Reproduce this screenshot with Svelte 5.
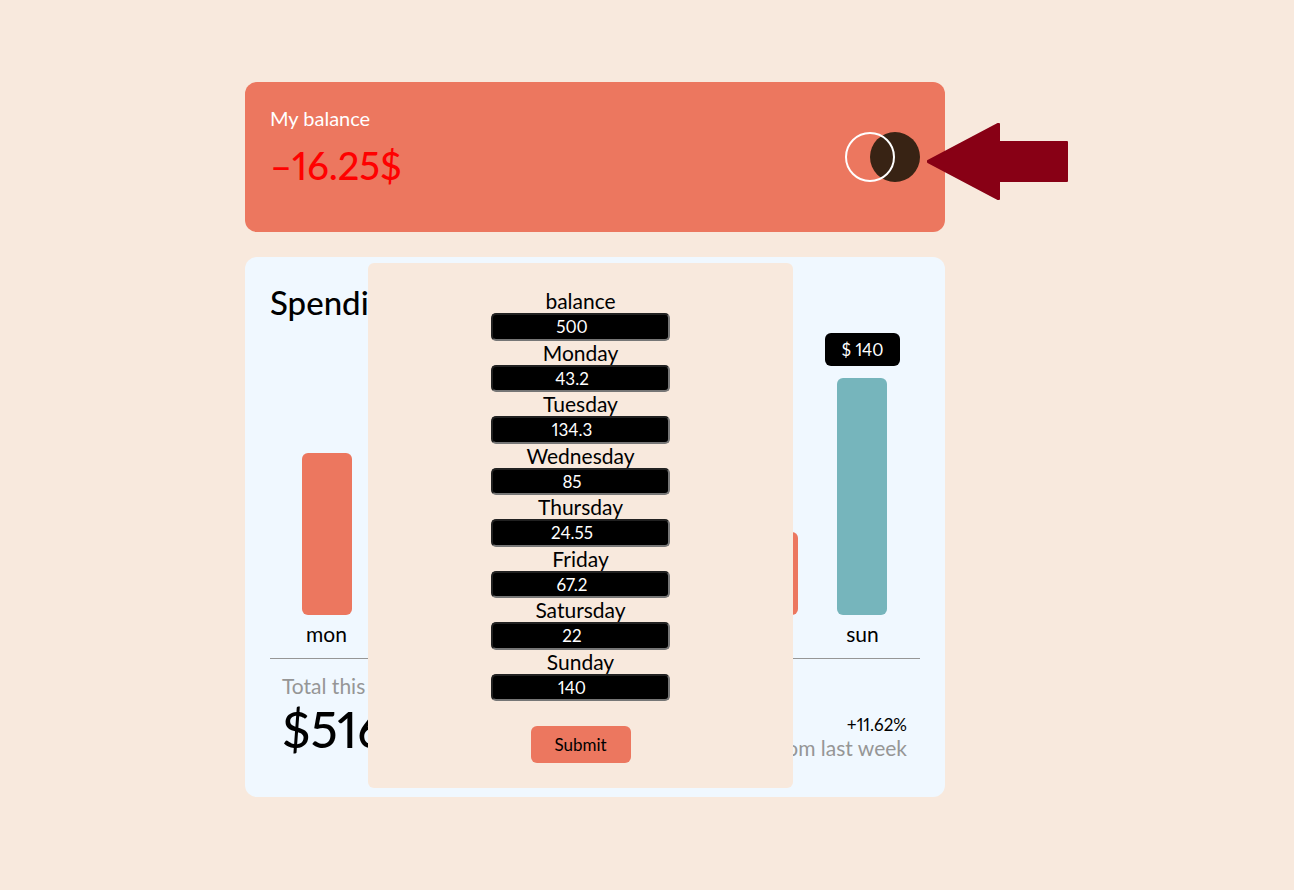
<script>
  let balance = $state(500);
  let days = $state([
    { name: 'Monday', short: 'mon', value: 43.2, height: 162 },
    { name: 'Tuesday', short: 'tue', value: 134.3, height: 230 },
    { name: 'Wednesday', short: 'wed', value: 85, height: 195 },
    { name: 'Thursday', short: 'thu', value: 24.55, height: 90 },
    { name: 'Friday', short: 'fri', value: 67.2, height: 180 },
    { name: 'Satursday', short: 'sat', value: 22, height: 83 },
    { name: 'Sunday', short: 'sun', value: 140, height: 237 }
  ]);
  const total = $derived(days.reduce((sum, day) => sum + (day.value || 0), 0));
  const remaining = $derived(balance - total);
  const highest = $derived(Math.max(...days.map((day) => day.value || 0)));
</script>

<main>
  <section class="balance">
    <div>
      <h2>My balance</h2>
      <p class="amount" class:negative={remaining < 0}>{remaining.toFixed(2).replace('-', '–')}$</p>
    </div>
    <button class="toggle" type="button" aria-label="Edit amounts">
      <svg width="75" height="50" viewBox="0 0 75 50" aria-hidden="true">
        <circle cx="50" cy="25" r="25" fill="#382314" />
        <circle cx="25" cy="25" r="24" fill="none" stroke="#fff" stroke-width="2" />
      </svg>
    </button>
    <svg class="pointer" width="141" height="77" viewBox="0 0 141 77" aria-hidden="true">
      <path d="M1 38 71 1h1v18h68v39H72v18h-1L1 39Z" fill="#880015" stroke="#880015" stroke-width="2" stroke-linejoin="round" />
    </svg>
  </section>

  <section class="spending">
    <h1>Spending - Last 7 days</h1>
    <div class="chart">
      {#each days as day}
        <div class="day">
          {#if day.value === highest}<span class="tip">$ {day.value}</span>{/if}
          <div class="bar" class:top={day.value === highest} style="height: {day.height}px"></div>
          <span class="name">{day.short}</span>
        </div>
      {/each}
    </div>
    <div class="summary">
      <div>
        <p class="muted">Total this week</p>
        <p class="total">${total.toFixed(2)}</p>
      </div>
      <div class="change">
        <p class="percent">+11.62%</p>
        <p class="muted">from last week</p>
      </div>
    </div>

    <form class="editor" onsubmit={(event) => event.preventDefault()}>
      <div class="fields">
        <div class="field">
          <label for="balance">balance</label>
          <input id="balance" type="number" step="any" bind:value={balance} />
        </div>
        {#each days as day}
          <div class="field">
            <label for={day.short}>{day.name}</label>
            <input id={day.short} type="number" step="any" bind:value={day.value} />
          </div>
        {/each}
      </div>
      <button class="submit" type="submit">Submit</button>
    </form>
  </section>
</main>

<style>
  :global(body) {
    margin: 0;
    background: #f8e9dd;
  }
  main {
    box-sizing: border-box;
    display: flex;
    flex-direction: column;
    align-items: center;
    gap: 25px;
    min-height: 100vh;
    padding: 82px 104px 25px 0;
    font-family: Lato, sans-serif;
    font-size: 21px;
    font-variant-numeric: proportional-nums;
    color: #000;
  }
  h1, h2, p {
    margin: 0;
  }
  section {
    box-sizing: border-box;
    position: relative;
    width: 100%;
    max-width: 700px;
    padding: 25px;
    border-radius: 12px;
  }
  .balance {
    display: flex;
    align-items: center;
    justify-content: space-between;
    min-height: 150px;
    padding-top: 24px;
    padding-bottom: 24px;
    background: #ec775f;
  }
  .balance > div {
    align-self: flex-start;
  }
  h2 {
    font-size: 20px;
    line-height: 24px;
    font-weight: 400;
    color: #fff;
  }
  .amount {
    margin-top: 11px;
    font-size: 38px;
    line-height: 48px;
    font-weight: 500;
  }
  .negative {
    color: #f00;
  }
  .toggle {
    display: flex;
    padding: 0;
    border: 0;
    background: none;
    cursor: pointer;
  }
  .pointer {
    position: absolute;
    top: 41px;
    left: calc(100% - 18px);
  }
  .spending {
    background: #f0f8ff;
    min-height: 540px;
  }
  h1 {
    font-size: 33px;
    line-height: 40px;
    font-weight: 500;
  }
  .chart {
    display: flex;
    align-items: flex-end;
    justify-content: space-between;
    height: 324px;
    padding: 0 20px 12px 19px;
    border-bottom: 1px solid #969696;
  }
  .day {
    display: flex;
    flex-direction: column;
    align-items: center;
    width: 75px;
  }
  .tip {
    width: 100%;
    margin-bottom: 12px;
    border-radius: 6px;
    background: #000;
    color: #fff;
    font-size: 17px;
    line-height: 33px;
    text-align: center;
  }
  .bar {
    width: 50px;
    border-radius: 6px;
    background: #ec775f;
  }
  .bar.top {
    background: #76b5bc;
  }
  .name {
    margin-top: 7px;
    line-height: 24px;
  }
  .summary {
    display: flex;
    align-items: flex-end;
    justify-content: space-between;
    padding: 15px 13px 0 12px;
  }
  .muted {
    line-height: 24px;
    color: #969696;
  }
  .total {
    font-size: 50px;
    line-height: 62px;
    font-weight: 500;
  }
  .change {
    text-align: right;
  }
  .percent {
    font-size: 17px;
    line-height: 22px;
  }
  .editor {
    box-sizing: border-box;
    position: absolute;
    top: 6px;
    left: 123px;
    display: flex;
    flex-direction: column;
    align-items: center;
    gap: 25px;
    width: 425px;
    padding: 26px 25px 25px;
    border-radius: 6px;
    background: #f8e9dd;
  }
  .fields {
    display: grid;
    grid-template-rows: repeat(8, minmax(0, 1fr));
    height: 412px;
  }
  .field {
    display: flex;
    flex-direction: column;
    align-items: center;
    min-height: 0;
  }
  label {
    line-height: 24px;
  }
  input {
    box-sizing: border-box;
    flex: 1;
    min-height: 0;
    width: 179px;
    padding: 0 4px 0 2px;
    border: 2px inset #767676;
    border-radius: 5px;
    background: #000;
    color: #fff;
    font: 17px Lato, sans-serif;
    font-variant-numeric: proportional-nums;
    text-align: center;
  }
  .submit {
    width: 100px;
    height: 37px;
    padding: 0;
    border: 0;
    border-radius: 6px;
    background: #ec775f;
    color: #000;
    font: 17px Lato, sans-serif;
    cursor: pointer;
  }
</style>
